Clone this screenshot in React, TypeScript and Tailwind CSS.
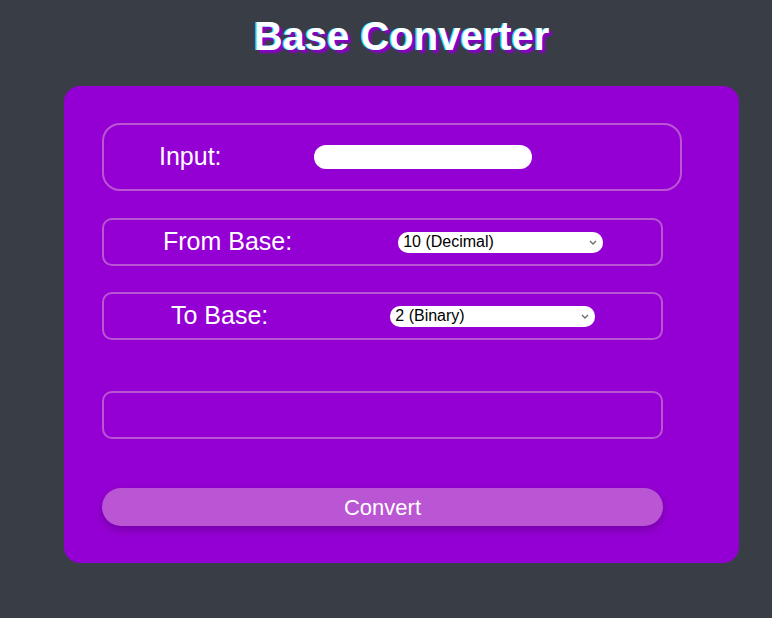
import { useState } from 'react';

// Base converter card: violet panel with input, two base selects, output and button
const bases = [
  { value: 2, label: '2 (Binary)' },
  { value: 8, label: '8 (Octal)' },
  { value: 10, label: '10 (Decimal)' },
  { value: 16, label: '16 (Hexadecimal)' },
];

type BaseSelectProps = {
  value: number;
  onChange: (v: number) => void;
  className: string;
};

function BaseSelect({ value, onChange, className }: BaseSelectProps) {
  return (
    <div className={`relative ${className}`}>
      <select
        value={value}
        onChange={(e) => onChange(Number(e.target.value))}
        className="block h-[21px] w-[205px] appearance-none rounded-[10px] bg-white pl-[5px] text-[16px] leading-none text-black outline-none"
      >
        {bases.map((b) => (
          <option key={b.value} value={b.value}>{b.label}</option>
        ))}
      </select>
      <svg
        className="pointer-events-none absolute right-[6px] top-[8px]"
        width="8"
        height="5"
        viewBox="0 0 8 5"
        fill="none"
      >
        <path d="M1 1l3 3 3-3" stroke="#6b6b6b" strokeWidth="1.3" />
      </svg>
    </div>
  );
}

export default function App() {
  const [input, setInput] = useState('');
  const [fromBase, setFromBase] = useState(10);
  const [toBase, setToBase] = useState(2);
  const [result, setResult] = useState('');

  const handleConvert = () => {
    const n = parseInt(input, fromBase);
    setResult(isNaN(n) ? '' : n.toString(toBase).toUpperCase());
  };

  return (
    <div className="min-h-[618px] bg-[#393e46] pt-[12px] font-['Liberation_Sans',Arial,sans-serif] text-white">
      <div className="ml-[64px] w-[675px]">
        <h1 className="text-center text-[40px] font-bold leading-[48px] [text-shadow:-1px_0_#00e5ff,3px_3px_2px_#8a00c8]">
          Base Converter
        </h1>

        <div className="mt-[26px] rounded-2xl bg-[#9400d3] pb-[37px] pl-[38px] pt-[37px]">
          {/* Input row */}
          <div className="flex h-[68px] w-[580px] items-center rounded-[18px] border-2 border-[#ba55d3]">
            <label htmlFor="num" className="ml-[55px] w-[155px] text-[25px]">Input:</label>
            <input
              id="num"
              type="text"
              value={input}
              onChange={(e) => setInput(e.target.value)}
              className="h-[24px] w-[218px] rounded-full bg-white px-2 text-[16px] text-black outline-none"
            />
          </div>

          {/* From base */}
          <div className="mt-[27px] flex h-[48px] w-[561px] items-center rounded-[10px] border-2 border-[#ba55d3]">
            <label className="ml-[59px] text-[25px]">From Base:</label>
            <BaseSelect value={fromBase} onChange={setFromBase} className="ml-[106px]" />
          </div>

          {/* To base */}
          <div className="mt-[26px] flex h-[48px] w-[561px] items-center rounded-[10px] border-2 border-[#ba55d3]">
            <label className="ml-[67px] text-[25px]">To Base:</label>
            <BaseSelect value={toBase} onChange={setToBase} className="ml-[122px]" />
          </div>

          {/* Result */}
          <div className="mt-[51px] flex h-[48px] w-[561px] items-center justify-center rounded-[10px] border-2 border-[#ba55d3] text-[22px]">
            {result}
          </div>

          <button
            onClick={handleConvert}
            className="mt-[49px] h-[38px] w-[561px] rounded-full bg-[#ba55d3] text-[22px] text-white shadow-[0_4px_8px_rgba(0,0,0,0.2)]"
          >
            Convert
          </button>
        </div>
      </div>
    </div>
  );
}
